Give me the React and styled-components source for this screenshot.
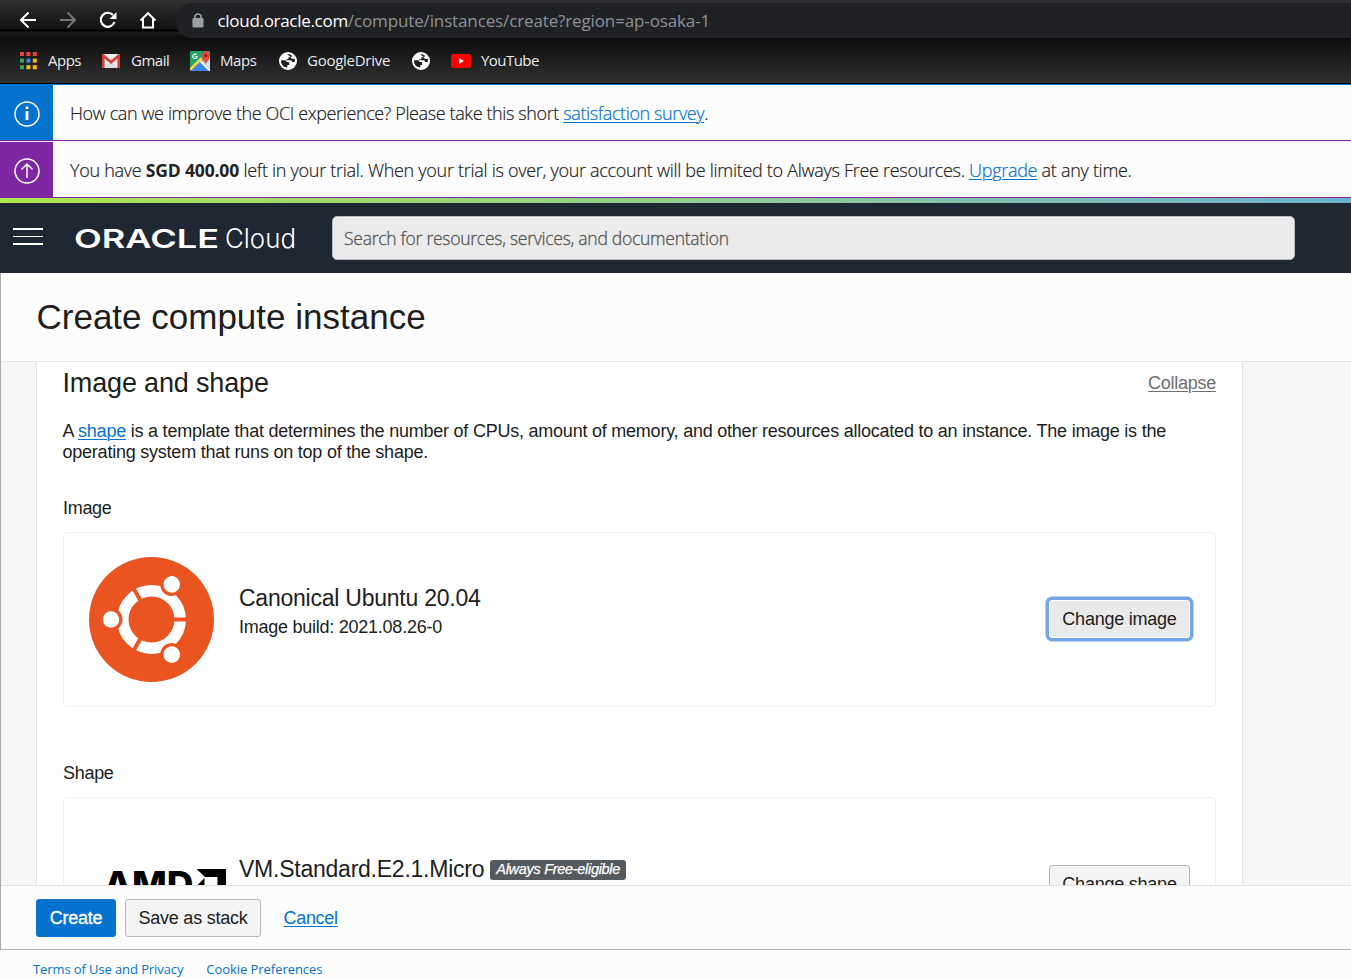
import React from 'react';
import styled, { createGlobalStyle } from 'styled-components';

const Global = createGlobalStyle`
  *{box-sizing:border-box}
  body{margin:0;background:#fcfcfc;overflow:hidden;font-family:"Liberation Sans",Arial,sans-serif;color:#201e1c}
  #root{height:978px}
`;
const Page = styled.div`height:978px;display:flex;flex-direction:column;`;
const ui = '"Open Sans","Noto Sans",sans-serif';

const NavBar = styled.div`
  height:38px;flex:none;display:flex;align-items:flex-end;
  background:linear-gradient(#303030,#121212 29px,#000 30px,#000 31px,#1c1c1c 32px,#0e0e0e);
`;
const NavIcons = styled.div`width:175px;height:38px;padding:2px 0 0 17.5px;display:flex;align-items:center;gap:20px;`;
const Address = styled.div`
  flex:1;height:35px;background:#202124;border-radius:18px 0 0 18px;display:flex;align-items:center;
  padding:0 0 0 16.5px;gap:14px;color:#9aa0a6;
`;
const Label = styled.span`
  font-family:${ui};font-size:${p => p.$size}px;letter-spacing:${p => p.$ls || 0}px;color:${p => p.$color || 'inherit'};
  font-weight:${p => p.$weight || 400};line-height:24px;white-space:nowrap;
`;
const Bookmarks = styled.div`
  height:46px;flex:none;background:linear-gradient(#0d0d0d,#303030);border-bottom:1px solid #000;
  display:flex;align-items:center;padding-left:18px;
`;
const Bookmark = styled.div`
  width:${p => p.$w}px;display:flex;align-items:center;gap:${p => p.$gap || 10}px;flex:none;
  svg{flex:none}
  span{margin-top:-2px}
`;

const Notice = styled.div`
  height:${p => p.$h}px;flex:none;border-top:1px solid ${p => p.$color};display:flex;
`;
const NoticeIcon = styled.div`
  width:53px;background:${p => p.$color};display:flex;align-items:center;justify-content:center;padding:3px 0 0 0;
  border-top:${p => p.$line ? '1px solid #f4e8f8' : '0'};
`;
const NoticeText = styled.p`
  margin:0;padding:${p => p.$pt}px 0 0 17px;font-family:${ui};font-weight:300;font-size:18px;line-height:54px;white-space:nowrap;
  letter-spacing:${p => p.$ls}px;color:#222;-webkit-text-stroke:.2px;
  a{color:#0572ce;text-decoration:underline;text-decoration-thickness:1px;text-underline-offset:2px}
  b{font-weight:700;font-size:17.5px;letter-spacing:-.15px;-webkit-text-stroke:0}
`;
const Rainbow = styled.div`height:6px;flex:none;border-top:1px solid #7f27a3;background:linear-gradient(90deg,#b0e84e,#6fb2cf);`;
const Header = styled.header`height:70px;flex:none;background:#1e2732;display:flex;align-items:center;padding:0 56px 0 13px;`;
const Burger = styled.div`
  width:30px;height:17px;margin-top:-4px;border-top:2px solid #fff;border-bottom:2px solid #fff;display:flex;align-items:center;
  &::after{content:"";width:30px;height:1px;background:#fff}
`;
const Brand = styled.div`width:289px;padding-left:31px;svg{display:block}`;
const Search = styled.div`
  width:963px;height:44px;background:#ebebeb;border:1px solid #b7bcc4;border-radius:5px;padding:0 11px 1px;
  display:flex;align-items:center;-webkit-text-stroke:.3px;
`;
const Frame = styled.main`height:677px;flex:none;border-left:1px solid #aaa;border-bottom:1px solid #b3b7bf;display:flex;flex-direction:column;`;
const TitleBar = styled.div`height:89px;flex:none;border-bottom:1px solid #e5e5e5;padding-left:35.5px;`;
const Title = styled.h1`margin:0;font-weight:400;font-size:35px;line-height:88px;letter-spacing:0;`;
const Scroller = styled.div`height:523px;flex:none;background:#f6f6f6;padding-left:35px;overflow:hidden;`;
const Panel = styled.section`width:1207px;height:640px;background:#fff;border:1px solid #e3e3e3;border-top:0;padding:0 26px;`;
const SectionHead = styled.div`height:42px;display:flex;justify-content:space-between;align-items:center;`;
const H2 = styled.h2`margin:0 0 0 -.5px;font-size:27px;font-weight:400;letter-spacing:-.16px;`;
const Collapse = styled.a`font-size:18px;color:#6f6f6f;text-decoration:underline;text-decoration-thickness:1px;text-underline-offset:2px;letter-spacing:-.27px;`;
const Intro = styled.p`
  margin:17px 0 0 -.5px;font-size:18px;line-height:21px;white-space:nowrap;letter-spacing:-.228px;
  a{color:#0572ce;text-decoration:underline;text-decoration-thickness:1px;text-underline-offset:2px}
`;
const FieldLabel = styled.div`font-size:18px;line-height:22px;letter-spacing:-.3px;margin-top:${p => p.$mt}px;`;
const Card = styled.div`
  height:175px;margin-top:13px;border:1px solid #f1f1f1;border-radius:4px;padding:0 25px;display:flex;align-items:center;
  svg{flex:none;display:block;overflow:visible}
`;
const CardInfo = styled.div`flex:1;padding:0 0 ${p => p.$pb}px 25px;`;
const Name = styled.div`font-size:23px;line-height:30px;letter-spacing:-.24px;display:flex;align-items:center;gap:6px;white-space:nowrap;`;
const Build = styled.div`font-size:18px;line-height:28px;letter-spacing:-.25px;`;
const Badge = styled.span`
  background:#555a5e;color:#fff;border-radius:3px;font-size:14.5px;font-style:italic;line-height:19px;height:20px;
  padding:0 6px;letter-spacing:-.3px;margin-top:2px;width:136px;-webkit-text-stroke:.25px;
`;
const Button = styled.button`
  height:38px;width:${p => p.$w}px;padding:0;font:400 18px "Liberation Sans",Arial,sans-serif;letter-spacing:-.23px;
  margin-bottom:${p => p.$raised ? 1 : 0}px;
  color:${p => p.$primary ? '#fff' : '#201e1c'};
  background:${p => p.$primary ? '#0572ce' : p.$focus ? '#e9e9e9' : '#f4f4f4'};
  border:1px solid ${p => p.$primary ? '#0572ce' : p.$focus ? '#fff' : '#b3b7bf'};border-radius:3px;
  box-shadow:${p => p.$focus ? '0 0 0 3.5px #73a6e3' : 'none'};
  -webkit-text-stroke:${p => p.$primary ? '.3px #fff' : '0'};
`;
const Actions = styled.div`flex:1;border-top:1px solid #e3e3e3;display:flex;align-items:center;padding:1px 0 0 35px;gap:9px;`;
const Cancel = styled.a`margin-left:13.5px;font-size:18px;color:#0572ce;text-decoration:underline;text-decoration-thickness:1px;text-underline-offset:2px;letter-spacing:-.3px;`;
const Footer = styled.footer`flex:1;display:flex;gap:23px;padding:7px 0 0 33px;color:#0572ce;`;

const Globe = () => (
  <svg width="18" height="18" viewBox="0 0 18 18">
    <circle cx="9" cy="9" r="9" fill="#fff" />
    <path fill="#1e1e1e" d="M2.200 8.200h3.300c1.500 0 2 .8 2 1.900h1.800c.6 0 .9.400.9.900v1.200c0 .6-.4.900-1 .9H8.300v2.500C4.600 15.300 2 12.300 2 9zM8.200 2.200c1.900-.2 3.700.4 4.900 1.500-.2.900-.8 1.500-1.900 1.500H9.400v1c0 .6-.4 1-1 1H7.200v1.100h4c1.300 0 1.900.700 1.900 1.800h2.500c.4-1.100.4-2.400.1-3.600l-1.500.4-2.300-.6V5.200z" />
  </svg>
);
const AppsIcon = () => {
  const c = ['#ea4335', '#ea4335', '#ea4335', '#34a853', '#4285f4', '#fbbc05', '#34a853', '#fbbc05', '#fbbc05'];
  return <svg width="19" height="18" viewBox="0 0 19 18">{c.map((f, i) => <rect key={i} x={2 + (i % 3) * 6.4} y={Math.floor(i / 3) * 6.6} width="4" height="4" fill={f} />)}</svg>;
};
const Gmail = () => (
  <svg width="18" height="14" viewBox="0 0 18 14">
    <rect width="18" height="14" rx="1" fill="#eee" /><path d="M2 14 9 7l7 7" fill="#ddd" />
    <path d="M1.300 14V1.500L9 8.300l7.700-6.800V14" fill="none" stroke="#d93b30" strokeWidth="2.500" />
  </svg>
);
const Maps = () => (
  <svg width="20" height="20" viewBox="0 0 20 20">
    <rect width="20" height="20" rx="1" fill="#1fa463" /><path d="M20 7v13L10 10z" fill="#dadce0" />
    <path d="M1 20 11 10l9 10z" fill="#4285f4" /><path d="M0 18.500 12 7" stroke="#ffd24d" strokeWidth="2.600" /><path d="m10.500 10.500 9.500 9.500" stroke="#fff" strokeWidth="1.500" />
    <path d="M15.700 14c-.6-4-4.200-5-4.200-9.200a4.200 4.700 0 0 1 8.400 0c0 4.200-3.600 5.200-4.200 9.200z" fill="#dd4b3e" /><circle cx="15.700" cy="4.600" r="1.500" fill="#822b24" />
    <path d="M6.500 3.700a2.200 2.200 0 1 0 .7 1.800H5" fill="none" stroke="#fff" strokeWidth="1.200" />
  </svg>
);
const YouTube = () => (
  <svg width="20" height="14" viewBox="0 0 20 14"><rect width="20" height="14" rx="2.500" fill="#f00" /><path d="M8 4v6l5-3z" fill="#fff" /></svg>
);
const Ubuntu = () => (
  <svg width="125" height="125" viewBox="-62.500 -62.500 125 125">
    <circle r="62.500" fill="#e95420" />
    <circle r="28.700" fill="none" stroke="#fff" strokeWidth="11.500" />
    {[0, 120, 240].map(a => (
      <g key={a} transform={`rotate(${a})`}>
        <path d="M20 0h18" stroke="#e95420" strokeWidth="4" />
        <circle cx="-40.500" r="11.500" fill="#e95420" /><circle cx="-40.500" r="8.300" fill="#fff" />
      </g>
    ))}
  </svg>
);
const Amd = () => (
  <svg width="125" height="32" viewBox="0 0 125 32">
    <text x="14.500" y="28" fontFamily="Inter, sans-serif" fontWeight="800" fontSize="35" textLength="90" lengthAdjust="spacingAndGlyphs">AMD</text>
    <path d="M107.500 0H137v29l-8.500-8.500V8h-12.500zM115.500 9v12H127l-8 8h-11.500V17z" />
  </svg>
);

export default function App() {
  return (
    <Page>
      <Global />
      <NavBar>
        <NavIcons>
          <svg width="20" height="20" viewBox="0 0 20 20" fill="none" stroke="#fff" strokeWidth="2"><path d="M18 10H3M10.500 2.500 3 10l7.500 7.500" /></svg>
          <svg width="20" height="20" viewBox="0 0 20 20" fill="none" stroke="#777" strokeWidth="2"><path d="M2 10h15M9.500 2.500 17 10l-7.500 7.500" /></svg>
          <svg width="20" height="20" viewBox="0 0 20 20"><path d="M16.500 12a7 7 0 1 1-1.500-7" fill="none" stroke="#fff" strokeWidth="2.200" /><path d="M18.500 2v7h-7z" fill="#fff" /></svg>
          <svg width="20" height="20" viewBox="0 0 20 20" fill="none" stroke="#fff" strokeWidth="2"><path d="M2.500 10.500 10 3.200l7.500 7.300M5 9v8.500h10V9" /></svg>
        </NavIcons>
        <Address>
          <svg width="12" height="15" viewBox="0 0 12 15"><path d="M3 7V4a3 3 0 0 1 6 0v3" fill="none" stroke="#9aa0a6" strokeWidth="1.600" /><rect x=".5" y="5" width="11" height="9.500" rx="1.200" fill="#9aa0a6" /></svg>
          <Label $size={17} $ls={-.13} $color="#8d9196"><Label $size={17} $ls={-.3} $color="#fff">cloud.oracle.com</Label>/compute/instances/create?region=ap-osaka-1</Label>
        </Address>
      </NavBar>
      <Bookmarks>
        <Bookmark $w={84} $gap={11}><AppsIcon /><Label $size={15} $ls={-.5} $color="#e8eaed">Apps</Label></Bookmark>
        <Bookmark $w={88} $gap={11}><Gmail /><Label $size={15} $ls={-.5} $color="#e8eaed">Gmail</Label></Bookmark>
        <Bookmark $w={89}><Maps /><Label $size={15} $ls={-.4} $color="#e8eaed">Maps</Label></Bookmark>
        <Bookmark $w={133}><Globe /><Label $size={15} $ls={-.26} $color="#e8eaed">GoogleDrive</Label></Bookmark>
        <Bookmark $w={39}><Globe /></Bookmark>
        <Bookmark $w={100}><YouTube /><Label $size={15} $ls={-.55} $color="#e8eaed">YouTube</Label></Bookmark>
      </Bookmarks>
      <Notice $h={56} $color="#0572ce">
        <NoticeIcon $color="#0572ce">
          <svg width="26" height="26" viewBox="0 0 26 26" fill="none" stroke="#fff"><circle cx="13" cy="13" r="12" strokeWidth="1.500" /><path d="M13 10v9M13 5.500v2.500" strokeWidth="2.800" /></svg>
        </NoticeIcon>
        <NoticeText $pt={1} $ls={-.385}>How can we improve the OCI experience? Please take this short <a>satisfaction survey</a>.</NoticeText>
      </Notice>
      <Notice $h={57} $color="#7f27a3">
        <NoticeIcon $color="#7f27a3" $line>
          <svg width="26" height="26" viewBox="0 0 26 26" fill="none" stroke="#fff"><circle cx="13" cy="13" r="12" strokeWidth="1.500" /><path d="M13 20V6M7.500 11.500 13 6l5.500 5.500" strokeWidth="1.500" /></svg>
        </NoticeIcon>
        <NoticeText $pt={2} $ls={-.29}>You have <b>SGD 400.00</b> left in your trial. When your trial is over, your account will be limited to Always Free resources. <a>Upgrade</a> at any time.</NoticeText>
      </Notice>
      <Rainbow />
      <Header>
        <Burger />
        <Brand>
          <svg width="222" height="32" viewBox="0 0 222 32" fill="#fff">
            <text x="0" y="25.500" fontFamily="Inter, sans-serif" fontWeight="600" fontSize="26" textLength="145" lengthAdjust="spacingAndGlyphs">ORACLE</text>
            <text x="151" y="25.500" fontFamily="Inter, sans-serif" fontWeight="300" fontSize="26.500" textLength="71" lengthAdjust="spacingAndGlyphs">Cloud</text>
          </svg>
        </Brand>
        <Search><Label $size={17.5} $weight={300} $color="#555" $ls={-.26}>Search for resources, services, and documentation</Label></Search>
      </Header>
      <Frame>
        <TitleBar><Title>Create compute instance</Title></TitleBar>
        <Scroller>
          <Panel>
            <SectionHead><H2>Image and shape</H2><Collapse>Collapse</Collapse></SectionHead>
            <Intro>A <a>shape</a> is a template that determines the number of CPUs, amount of memory, and other resources allocated to an instance. The image is the<br />operating system that runs on top of the shape.</Intro>
            <FieldLabel $mt={34}>Image</FieldLabel>
            <Card>
              <Ubuntu />
              <CardInfo $pb={16}><Name>Canonical Ubuntu 20.04</Name><Build>Image build: 2021.08.26-0</Build></CardInfo>
              <Button $w={141} $focus $raised>Change image</Button>
            </Card>
            <FieldLabel $mt={55}>Shape</FieldLabel>
            <Card>
              <Amd />
              <CardInfo $pb={32}><Name>VM.Standard.E2.1.Micro <Badge>Always Free-eligible</Badge></Name></CardInfo>
              <Button $w={141} $raised>Change shape</Button>
            </Card>
          </Panel>
        </Scroller>
        <Actions>
          <Button $w={80} $primary>Create</Button>
          <Button $w={136}>Save as stack</Button>
          <Cancel>Cancel</Cancel>
        </Actions>
      </Frame>
      <Footer><Label $size={13} $ls={-.1}>Terms of Use and Privacy</Label><Label $size={13} $ls={-.05}>Cookie Preferences</Label></Footer>
    </Page>
  );
}
